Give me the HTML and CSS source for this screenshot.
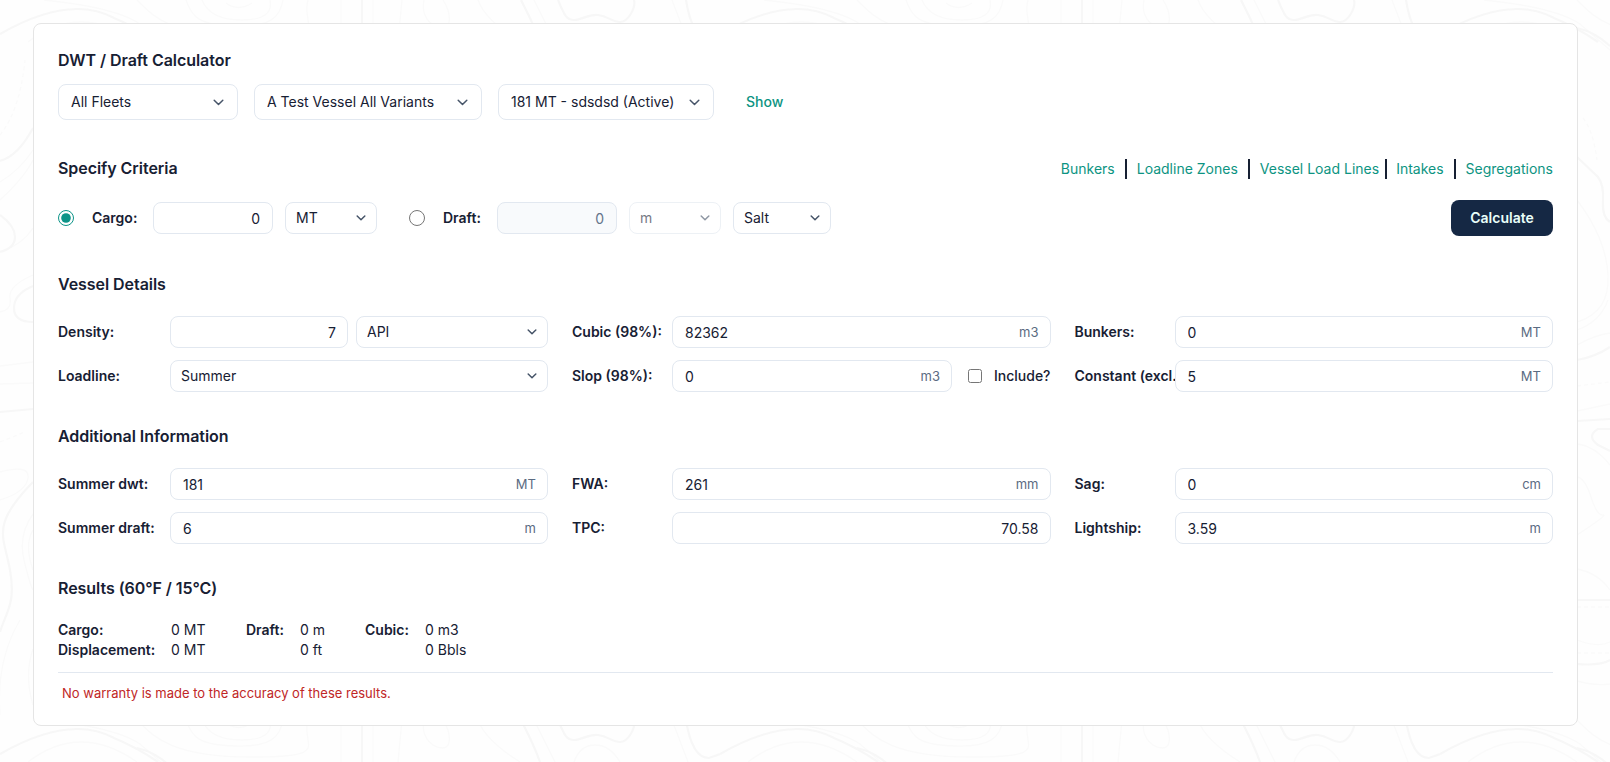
FILE: index.html
```html
<!DOCTYPE html>
<html lang="en">
<head>
  <meta charset="UTF-8">
  <meta name="viewport" content="width=device-width,initial-scale=1.0">
  <title>DWT / Draft Calculator</title>
  <link rel="stylesheet" href="styles.css">
</head>
<body>

  <!-- contour line backdrop, repeats every 720px -->
  <svg class="backdrop" aria-hidden="true">
    <defs>
      <pattern id="contours" width="720" height="720" patternUnits="userSpaceOnUse">
        <g class="line">
          <path d="M28 42Q80 2 137 42M44 0Q115 7 140 24L170 50M137 0C150 12 165 37 250 37S300 26 308 0M186 0C192 18 200 25 235 26S280 18 283 0"/>
          <path d="M202 0Q210 20 242 20T270 0M226 3Q238 12 252 3M341 0V50M373 0V50M402 0L398 42M424 0C420 20 435 28 443 28S452 14 443 0"/>
          <path d="M478 0Q485 20 520 42M534 0L555 42M672 0L688 42M574 42Q580 25 595 25T620 42"/>
          <path d="M0 200Q24 178 33 160M0 182Q20 170 33 150M0 252Q22 245 33 228M0 312Q12 310 10 298T33 275M0 366L33 362M0 384L33 383M0 472Q30 464 28 478T0 500"/>
          <path d="M33 514Q18 535 24 560T33 590M33 530Q24 545 33 570M0 715Q-4 660 20 620M33 649Q24 675 33 705"/>
          <path d="M137 200Q166 238 168 275T137 322M137 330Q160 322 168 300M137 345Q155 335 170 333M137 411L170 404M137 444Q155 446 170 465M137 477Q145 478 151 497T163 515T137 535M137 569Q158 573 170 590M137 640Q158 648 170 642M137 681Q155 686 170 684"/>
        </g>
        <g class="line dashed">
          <path d="M0 135Q20 110 25 60M143 118Q153 130 157 160M137 386L170 382M0 442L25 432M137 607H170M137 653H170"/>
        </g>
        <g class="line thick">
          <path d="M0 34Q70 -6 114 18Q138 28 158 42M686 0Q692 38 709 38L720 34M362 0V50M521 0Q534 25 540 42M558 0C564 14 566 20 574 20S588 14 598 15S612 22 620 22S636 8 634 0"/>
          <path d="M0 161Q18 156 33 128M0 215Q15 226 15 237T0 252M33 286Q14 294 14 308T33 322M0 412L33 409M33 482C-10 526 4 536 10 570S6 612 0 632"/>
          <path d="M137 28Q155 32 170 46M137 157L158 177Q164 185 163 201T170 222M137 360Q155 357 170 347M137 421L170 419M170 429H158Q146 436 158 445L170 451M137 600H170M137 664Q160 666 170 660"/>
        </g>
      </pattern>
    </defs>
    <rect width="100%" height="100%" fill="url(#contours)"/>
  </svg>

  <main class="card">
    <section class="section">
      <h2>DWT / Draft Calculator</h2>
      <div class="vessel-row">
        <select class="large fleet"><option>All Fleets</option></select>
        <select class="large vessel"><option>A Test Vessel All Variants</option></select>
        <select class="large variant"><option>181 MT - sdsdsd (Active)</option></select>
        <a class="show" href="#">Show</a>
      </div>
    </section>

    <section class="section">
      <div class="section-head">
        <h2>Specify Criteria</h2>
        <nav class="links">
          <a href="#">Bunkers</a><span class="bar"></span>
          <a href="#">Loadline Zones</a><span class="bar"></span>
          <a href="#">Vessel Load Lines</a><span class="bar tight"></span>
          <a href="#">Intakes</a><span class="bar"></span>
          <a href="#">Segregations</a>
        </nav>
      </div>
      <div class="criteria">
        <input type="radio" name="mode" id="modeCargo" checked>
        <label class="cargo-label" for="modeCargo">Cargo:</label>
        <input class="field amount" type="text" value="0">
        <select class="unit-select"><option>MT</option></select>
        <input class="draft-radio" type="radio" name="mode" id="modeDraft">
        <label class="draft-label" for="modeDraft">Draft:</label>
        <input class="field amount" type="text" value="0" disabled>
        <select class="unit-select" disabled><option>m</option></select>
        <select class="water"><option>Salt</option></select>
        <button class="calculate" type="button">Calculate</button>
      </div>
    </section>

    <section class="section details">
      <h2>Vessel Details</h2>
      <div class="grid">
        <div class="row">
          <label>Density:</label>
          <div class="density">
            <input class="field right" type="text" value="7">
            <select><option>API</option></select>
          </div>
        </div>
        <div class="row">
          <label>Cubic (98%):</label>
          <div class="field"><input type="text" value="82362"><span>m3</span></div>
        </div>
        <div class="row">
          <label>Bunkers:</label>
          <div class="field"><input type="text" value="0"><span>MT</span></div>
        </div>
        <div class="row">
          <label>Loadline:</label>
          <select><option>Summer</option></select>
        </div>
        <div class="row">
          <label>Slop (98%):</label>
          <div class="slop">
            <div class="field"><input type="text" value="0"><span>m3</span></div>
            <input type="checkbox" id="include">
            <label class="include" for="include">Include?</label>
          </div>
        </div>
        <div class="row">
          <label>Constant (excl.</label>
          <div class="field"><input type="text" value="5"><span>MT</span></div>
        </div>
      </div>
    </section>

    <section class="section details">
      <h2>Additional Information</h2>
      <div class="grid">
        <div class="row">
          <label>Summer dwt:</label>
          <div class="field"><input type="text" value="181"><span>MT</span></div>
        </div>
        <div class="row">
          <label>FWA:</label>
          <div class="field"><input type="text" value="261"><span>mm</span></div>
        </div>
        <div class="row">
          <label>Sag:</label>
          <div class="field"><input type="text" value="0"><span>cm</span></div>
        </div>
        <div class="row">
          <label>Summer draft:</label>
          <div class="field"><input type="text" value="6"><span>m</span></div>
        </div>
        <div class="row">
          <label>TPC:</label>
          <input class="field right" type="text" value="70.58">
        </div>
        <div class="row">
          <label>Lightship:</label>
          <div class="field"><input type="text" value="3.59"><span>m</span></div>
        </div>
      </div>
    </section>

    <section class="results">
      <h2>Results (60°F / 15°C)</h2>
      <div class="results-grid">
        <b>Cargo:</b><span>0 MT</span><b>Draft:</b><span>0 m</span><b>Cubic:</b><span>0 m3</span>
        <b>Displacement:</b><span>0 MT</span><b></b><span>0 ft</span><b></b><span>0 Bbls</span>
      </div>
      <p class="warning">No warranty is made to the accuracy of these results.</p>
    </section>
  </main>

</body>
</html>
```
FILE: styles.css
```css
* {
  box-sizing: border-box;
}
body {
  margin: 0;
  padding: 23px 32px 0 33px;
  height: 762px;
  overflow: hidden;
  background: #fefefe;
  color: #172033;
  font-family: Inter, "Liberation Sans", sans-serif;
  font-size: 14px;
  line-height: 20px;
}
.backdrop {
  position: absolute;
  top: 0;
  left: 0;
  z-index: -1;
  width: 100%;
  height: 762px;
}
.line {
  fill: none;
  stroke: #fafafa;
  stroke-width: 1.3;
}
.dashed {
  stroke-dasharray: 4 3;
}
.thick {
  stroke: #f7f7f7;
  stroke-width: 2.2;
}
.card {
  height: 703px;
  padding: 24px;
  background: #fff;
  border: 1px solid #e5e5e5;
  border-radius: 8px;
}
h2 {
  margin: 0;
  font-size: 16px;
  line-height: 24px;
  font-weight: 600;
  letter-spacing: -0.05px;
}
a {
  color: #0d9482;
  text-decoration: none;
}
label {
  font-weight: 600;
  white-space: nowrap;
}
.section {
  margin-bottom: 36px;
}

/* form controls */
input,
select,
button {
  margin: 0;
  color: inherit;
  font: inherit;
}
select {
  height: 32px;
  padding: 0 30px 0 10px;
  border: 1px solid #e2e8f0;
  border-radius: 8px;
  appearance: none;
  background: #fff url("data:image/svg+xml,%3Csvg xmlns='http://www.w3.org/2000/svg' width='10' height='6' fill='none' stroke='%23475569' stroke-width='1.5' stroke-linecap='round' stroke-linejoin='round'%3E%3Cpath d='M1.2 1l3.8 3.8L8.8 1'/%3E%3C/svg%3E") no-repeat right 10px center;
}
select:disabled {
  opacity: 0.6;
}
select.large {
  height: 36px;
  padding-left: 12px;
  background-image: url("data:image/svg+xml,%3Csvg xmlns='http://www.w3.org/2000/svg' width='11' height='7' fill='none' stroke='%23475569' stroke-width='1.5' stroke-linecap='round' stroke-linejoin='round'%3E%3Cpath d='M1.2 1.2l4.3 4.3L9.8 1.2'/%3E%3C/svg%3E");
  background-position: right 13px center;
}
.field {
  display: flex;
  align-items: center;
  height: 32px;
  min-width: 0;
  padding: 2px 11px 0 12px;
  border: 1px solid #e2e8f0;
  border-radius: 8px;
  background: #fff;
}
.field input {
  flex: 1;
  min-width: 0;
  padding: 0;
  border: 0;
  background: none;
}
.field span {
  margin-top: -2px;
  color: #5b6b82;
  font-size: 13px;
}
.field:disabled {
  background: #f8fafc;
  color: #64748b;
}
.right,
.amount {
  padding-top: 1px;
  text-align: right;
}
.amount {
  padding-right: 12px;
}
input[type="radio"] {
  width: 16px;
  height: 16px;
  accent-color: #0d9488;
}
input[type="checkbox"] {
  width: 14px;
  height: 14px;
}

/* fleet / vessel selection */
.vessel-row {
  display: flex;
  align-items: center;
  gap: 16px;
  margin-top: 12px;
}
.fleet {
  width: 180px;
}
.vessel {
  width: 228px;
}
.variant {
  width: 216px;
}
.show {
  margin-left: 16px;
  font-weight: 500;
}

/* criteria */
.section-head {
  display: flex;
  justify-content: space-between;
  align-items: center;
}
.links {
  display: flex;
  align-items: center;
  height: 24px;
  padding-top: 1px;
}
.bar {
  width: 2px;
  height: 20px;
  margin: 0 10px;
  background: #172033;
}
.bar.tight {
  margin: 0 9px 0 6px;
}
.criteria {
  display: flex;
  align-items: center;
  height: 36px;
  margin-top: 20px;
}
.amount {
  width: 120px;
  margin-right: 12px;
}
.cargo-label {
  width: 61px;
  margin-left: 18px;
}
.unit-select {
  width: 92px;
}
.draft-radio {
  margin-left: 32px;
}
.draft-label {
  width: 54px;
  margin-left: 18px;
}
.water {
  width: 98px;
  margin-left: 12px;
}
.calculate {
  width: 102px;
  height: 36px;
  margin-left: auto;
  border: 0;
  border-radius: 8px;
  background: #152844;
  color: #e9fffa;
  font-weight: 600;
}

/* detail grids */
.details {
  margin-bottom: 32px;
}
.grid {
  display: grid;
  grid-template-columns: 490px 1fr 1fr;
  gap: 12px 24px;
  margin-top: 20px;
}
.row {
  display: grid;
  grid-template-columns: 100px minmax(0, 1fr);
  align-items: center;
}
.row:nth-child(3n + 1) {
  grid-template-columns: 112px minmax(0, 1fr);
}
.density {
  display: grid;
  grid-template-columns: 178px 1fr;
  gap: 8px;
}
.slop {
  display: flex;
  align-items: center;
}
.slop .field {
  flex: 1;
}
.slop input[type="checkbox"] {
  margin-left: 16px;
}
.include {
  margin-left: 12px;
  font-weight: 500;
}

/* results */
.results-grid {
  display: grid;
  grid-template-columns: 113px 75px 54px 65px 60px auto;
  justify-content: start;
  margin-top: 20px;
}
.results-grid b {
  font-weight: 600;
}
.warning {
  margin: 12px 0 0;
  padding: 10px 4px 0;
  border-top: 1px solid #e2e8f0;
  color: #c02626;
  font-size: 13px;
}
```
